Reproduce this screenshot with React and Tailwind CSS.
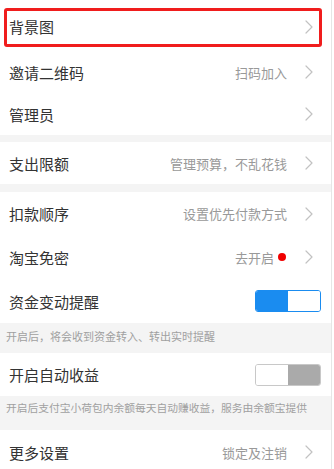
import React from "react";

const font = { fontFamily: '"Noto Sans CJK SC", "Noto Sans", sans-serif' };

function Chevron() {
  return (
    <svg width="8" height="14" viewBox="0 0 8 14" className="shrink-0">
      <path d="M1 1 L7 7 L1 13" fill="none" stroke="#c2c2c2" strokeWidth="1.2" strokeLinecap="round" strokeLinejoin="round" />
    </svg>
  );
}

function Row({ label, value, dot, h = "h-[42px]" }) {
  return (
    <div className={`flex items-center ${h} shrink-0 bg-white pl-[9px] pr-[18px]`}>
      <span className="text-[15px] text-[#333] flex-1 leading-none">{label}</span>
      {value && <span className="text-[13px] text-[#999] leading-none">{value}</span>}
      {dot && <span className="ml-[4px] w-[8px] h-[8px] rounded-full bg-[#f00000]" />}
      <span className={dot ? "ml-[19px]" : "ml-[18px]"}>
        <Chevron />
      </span>
    </div>
  );
}

function Toggle({ on }) {
  return (
    <div
      className={`flex w-[66px] h-[22px] rounded-[3px] overflow-hidden border ${
        on ? "border-[#1a8cf0]" : "border-[#c8c8c8]"
      }`}
    >
      <div className={`flex-1 ${on ? "bg-[#1a8cf0]" : "bg-white"}`} />
      <div className={`flex-1 ${on ? "bg-white" : "bg-[#aaaaaa]"}`} />
    </div>
  );
}

function ToggleRow({ label, on, h = "h-[44px]" }) {
  return (
    <div className={`flex items-center ${h} shrink-0 bg-white pl-[9px] pr-[10px]`}>
      <span className="text-[15px] text-[#333] flex-1 leading-none">{label}</span>
      <Toggle on={on} />
    </div>
  );
}

export default function App() {
  return (
    <div className="w-[334px] h-[469px] bg-white overflow-hidden" style={font}>
      <div className="w-[332px] h-full border-r border-[#e6e6e6] flex flex-col">
        <div className="relative shrink-0">
          <Row label="背景图" h="h-[51px] pt-[2px]" />
          <div className="absolute left-[4px] top-[8px] w-[318px] h-[39px] border-[3px] border-[#f01d1d] rounded-[3px]" />
        </div>
        <Row label="邀请二维码" value="扫码加入" />
        <Row label="管理员" />
        <div className="h-[7px] bg-[#f4f4f4] shrink-0" />
        <Row label="支出限额" value="管理预算，不乱花钱" />
        <div className="h-[8px] bg-[#f4f4f4] shrink-0" />
        <Row label="扣款顺序" value="设置优先付款方式" h="h-[43px]" />
        <Row label="淘宝免密" value="去开启" dot h="h-[44px]" />
        <ToggleRow label="资金变动提醒" on />
        <div className="h-[30px] shrink-0 bg-[#f4f4f4] pl-[6px] pt-[5px] text-[11px] leading-[16px] text-[#a0a0a0]">
          开启后，将会收到资金转入、转出实时提醒
        </div>
        <ToggleRow label="开启自动收益" on={false} h="h-[43px]" />
        <div className="h-[34px] shrink-0 bg-[#f4f4f4] pl-[6px] pt-[4px] text-[10.75px] leading-[16px] text-[#a0a0a0] whitespace-nowrap">
          开启后支付宝小荷包内余额每天自动赚收益，服务由余额宝提供
        </div>
        <Row label="更多设置" value="锁定及注销" h="h-[44px]" />
      </div>
    </div>
  );
}
